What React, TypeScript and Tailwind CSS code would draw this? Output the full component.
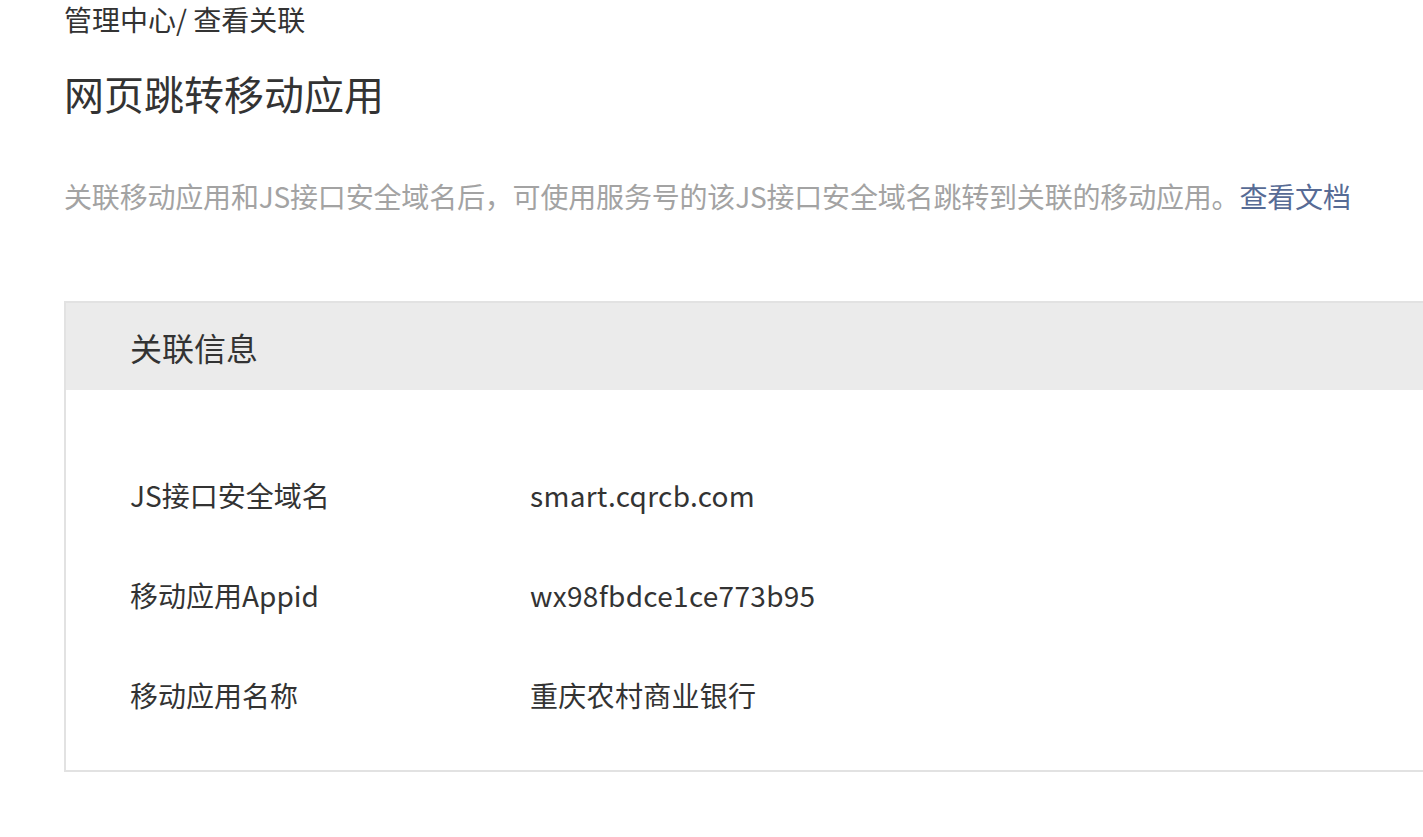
import React from 'react';

type InfoRow = {
  label: string;
  value: string;
};

const rows: InfoRow[] = [
  { label: 'JS接口安全域名', value: 'smart.cqrcb.com' },
  { label: '移动应用Appid', value: 'wx98fbdce1ce773b95' },
  { label: '移动应用名称', value: '重庆农村商业银行' },
];

const App = () => {
  return (
    <div
      className="min-h-screen overflow-x-hidden bg-white pl-16 text-[#333]"
      style={{ fontFamily: '"Noto Sans CJK SC", "Noto Sans", sans-serif' }}
    >
      <div className="pt-px text-[28px] leading-[36px]">管理中心/ 查看关联</div>

      <h1 className="mt-[28px] text-[40px] font-normal leading-[56px]">网页跳转移动应用</h1>

      <p className="mt-[55px] text-[28px] leading-[40px] tracking-[-0.18px] text-[#a3a3a3]">
        关联移动应用和JS接口安全域名后，可使用服务号的该JS接口安全域名跳转到关联的移动应用。
        <a href="#" className="text-[#576b95]">查看文档</a>
      </p>

      <div className="mt-[85px] mr-[-40px] border-2 border-[#e2e2e2]">
        <div className="flex h-[87px] items-center bg-[#ebebeb] pl-16 text-[32px]">关联信息</div>
        <div className="pt-[55px] pb-[25px] pl-16">
          {rows.map((row) => (
            <div key={row.label} className="flex h-[100px] items-center text-[28px]">
              <div className="w-[400px]">{row.label}</div>
              <div className="tracking-[0.3px]">{row.value}</div>
            </div>
          ))}
        </div>
      </div>
    </div>
  );
};

export default App;
